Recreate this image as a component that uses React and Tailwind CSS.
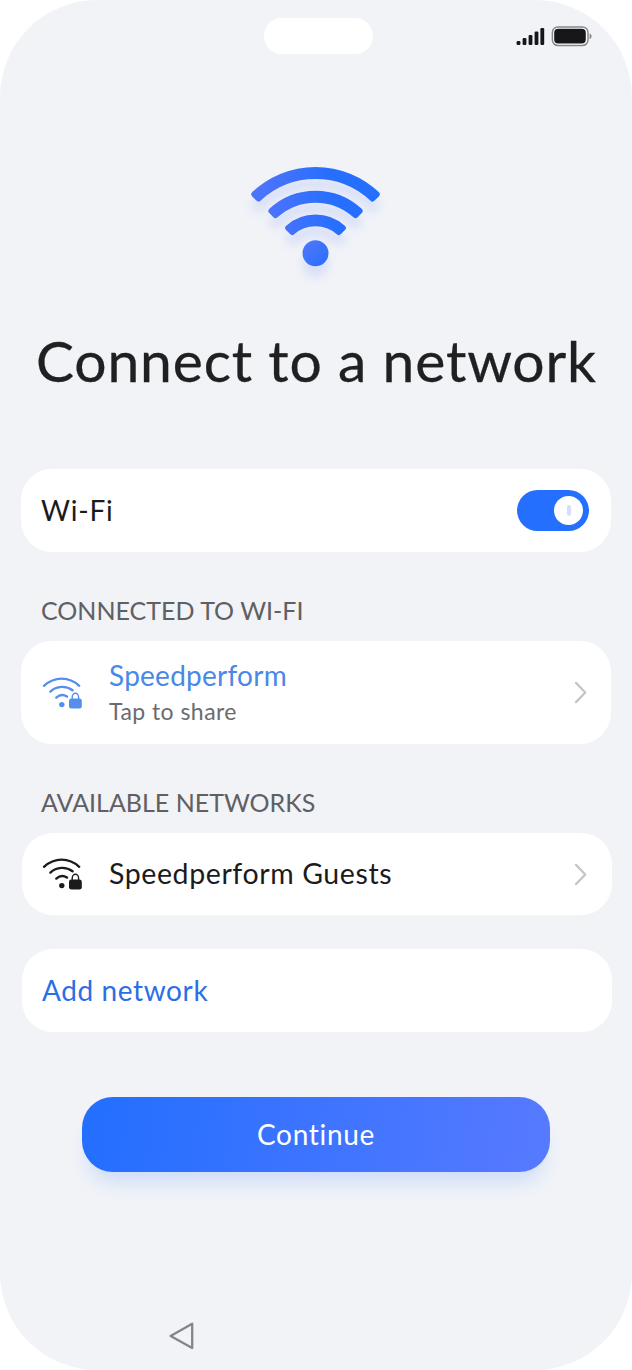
function Signal() {
  return (
    <svg width="76" height="22" viewBox="0 0 76 22" fill="#17171a">
      <rect x="0.6" y="15" width="3.8" height="4" rx="1.2" />
      <rect x="6.6" y="12" width="3.8" height="7" rx="1.2" />
      <rect x="12.6" y="9" width="3.8" height="10" rx="1.2" />
      <rect x="18.6" y="5.6" width="3.8" height="13.4" rx="1.2" />
      <rect x="24.4" y="2" width="3.8" height="17" rx="1.2" />
      <rect x="36.4" y="0.9" width="35.6" height="18.6" rx="5.6" fill="white" stroke="#85858b" strokeWidth="1.5" />
      <rect x="38.2" y="2.8" width="31.6" height="14.8" rx="4" />
      <path d="M73.6 7.4c2.6.8 2.6 4.8 0 5.8z" fill="#85858b" />
    </svg>
  );
}

function WifiHero() {
  return (
    <svg
      width="129"
      height="102"
      viewBox="-64.5 -94.5 129 102"
      className="overflow-visible drop-shadow-[0_11px_5px_rgba(60,100,255,0.13)]"
    >
      <defs>
        <linearGradient id="hero" gradientUnits="userSpaceOnUse" x1="-45" y1="-40" x2="20" y2="-52">
          <stop offset="0" stopColor="#4c73fb" />
          <stop offset="1" stopColor="#266ffe" />
        </linearGradient>
        <linearGradient id="dot" x1="0" y1="0" x2="1" y2="1">
          <stop offset="0" stopColor="#5277fc" />
          <stop offset="1" stopColor="#266ffe" />
        </linearGradient>
      </defs>
      <g fill="url(#hero)" stroke="url(#hero)" strokeWidth="6" strokeLinejoin="round">
        <path d="M-61.2-65.9A89 89 0 0 1 61.2-65.9L57-61.7A83.5 83.5 0 0 0-57-61.7Z" transform="translate(0 -.3)" />
        <path d="M-44.1-49.2A65 65 0 0 1 44.1-49.2L40-45.1A59.5 59.5 0 0 0-40-45.1Z" transform="translate(0 -.3)" />
        <path d="M-27.3-32.3A41 41 0 0 1 27.3-32.3L23.3-28.2A35.5 35.5 0 0 0-23.3-28.2Z" transform="translate(0 -.3)" />
      </g>
      <circle cx="0" cy="-7.2" r="13" fill="url(#dot)" />
    </svg>
  );
}

function WifiLock({ className }) {
  return (
    <svg width="40" height="34" viewBox="42 676 40 34" fill="none" className={className}>
      <g stroke="currentColor" strokeWidth="2.4" strokeLinecap="round">
        <path d="M44 685.8C54.5 676.2 69 676.2 79.2 685.8" />
        <path d="M50.4 691.6C56.5 685.7 66 685.4 72.6 690.2" />
        <path d="M56.3 697.6C59.5 694.8 63.5 694.4 67 696.6" />
      </g>
      <circle cx="61.8" cy="704.6" r="2.7" fill="currentColor" />
      <rect x="69" y="698.6" width="12.8" height="10" rx="2.4" fill="currentColor" />
      <path d="M72.2 700v-2.6a3.1 4 0 0 1 6.4 0V700" stroke="currentColor" strokeWidth="1.4" />
    </svg>
  );
}

function Chevron() {
  return (
    <svg width="13" height="23" viewBox="0 0 13 23" fill="none" stroke="#c6c6c8" strokeWidth="2.3" strokeLinecap="round" strokeLinejoin="round">
      <path d="M2 1.9L11.3 11.5L2 21.1" />
    </svg>
  );
}

export default function App() {
  return (
    <div className="h-[1370px] w-[632px] overflow-hidden bg-white font-['Lato',sans-serif] [font-variant-ligatures:none]">
      <div className="flex h-full flex-col rounded-[97px] bg-[#f1f3f7] text-[#1b1b1d]">
        <header className="grid h-[72px] shrink-0 grid-cols-[264px_109px_1fr]">
          <div />
          <div className="mt-[18px] h-9 rounded-full bg-white" />
          <div className="ml-[143px] mt-[26px]">
            <Signal />
          </div>
        </header>

        <div className="flex h-[258px] shrink-0 justify-center pr-px pt-[94px]">
          <WifiHero />
        </div>

        <h1 className="ml-[36px] h-[139px] shrink-0 whitespace-nowrap text-[57px] leading-[60px] tracking-[0.82px] text-[#202022] [-webkit-text-stroke:0.3px_#202022]">
          Connect to a network
        </h1>

        <main className="flex shrink-0 flex-col pl-[21px]">
          <section className="flex h-[83px] w-[590px] items-center justify-between rounded-[31px] bg-white pl-[20px] pr-[22px]">
            <span className="pb-0.5 text-[28px] tracking-[0.8px]">Wi-Fi</span>
            <div className="flex h-[41px] w-[72px] items-center justify-end rounded-full bg-[#256fff] pr-1.5">
              <div className="flex size-[29px] items-center justify-center rounded-full bg-white">
                <div className="h-[11px] w-1 rounded-full bg-[#d3e1ff]" />
              </div>
            </div>
          </section>

          <h2 className="ml-[20px] mt-[40px] h-[49px] text-[25px] leading-[36px] text-[#606063]">CONNECTED TO WI-FI</h2>
          <section className="flex h-[103px] w-[590px] items-center rounded-[31px] bg-white pl-[21px] pr-[24px]">
            <WifiLock className="text-[#568eee]" />
            <div className="ml-[27px] flex-1 pb-px">
              <div className="text-[28px] leading-[36px] tracking-[0.25px] text-[#4a88e8]">Speedperform</div>
              <div className="pt-px text-[23px] leading-[34px] tracking-[0.45px] text-[#6b6b6e]">Tap to share</div>
            </div>
            <Chevron />
          </section>

          <h2 className="ml-[20px] mt-[40px] h-[49px] text-[25px] leading-[36px] text-[#606063]">AVAILABLE NETWORKS</h2>
          <section className="ml-px flex h-[82px] w-[590px] items-center rounded-[31px] bg-white pl-5 pr-[25px]">
            <WifiLock className="text-[#1b1b1d]" />
            <div className="ml-[27px] flex-1 pb-0.5 text-[28.5px] tracking-[0.6px]">Speedperform Guests</div>
            <Chevron />
          </section>

          <section className="ml-px mt-[34px] flex h-[83px] w-[590px] items-center rounded-[31px] bg-white pb-0.5 pl-[20px] text-[28px] tracking-[0.6px] text-[#2b6fe6]">
            Add network
          </section>
        </main>

        <button className="ml-[82px] mt-[65px] h-[75px] w-[468px] shrink-0 rounded-[31px] bg-[linear-gradient(98deg,#256fff_5%,#5579ff_95%)] pb-0.5 text-[28px] tracking-[0.7px] text-white shadow-[0_17px_20px_-8px_rgba(70,130,255,0.22)]">
          Continue
        </button>

        <nav className="ml-[168px] mt-[149px]">
          <svg width="28" height="30" viewBox="0 0 28 30" fill="none" stroke="#858588" strokeWidth="2.3" strokeLinejoin="round">
            <path d="M24.2 2.7V27L2.6 14.9Z" />
          </svg>
        </nav>
      </div>
    </div>
  );
}
